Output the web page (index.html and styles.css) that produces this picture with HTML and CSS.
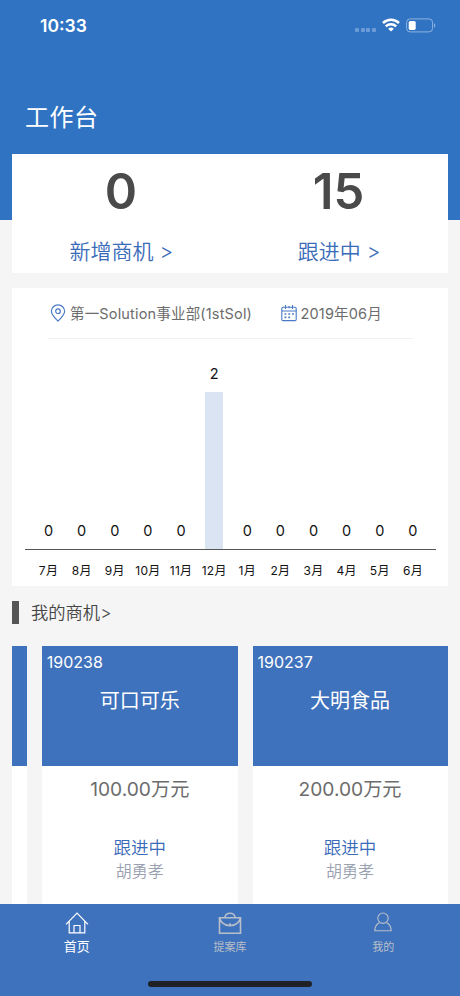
FILE: index.html
```html
<!DOCTYPE html>
<html lang="zh-CN">
<head>
<meta charset="utf-8">
<meta name="viewport" content="width=device-width, initial-scale=1">
<title>工作台</title>
<link rel="stylesheet" href="styles.css">
</head>
<body>
<div class="app">
  <header class="hero">
    <div class="status">
      <span class="time">10:33</span>
      <span class="status-icons">
        <span class="signal"><i></i><i></i><i></i><i></i></span>
        <svg class="wifi" viewBox="0 0 18 14" width="18" height="14" fill="none" stroke="#fff" stroke-width="2.5"><path d="M1 5a11.500 11.500 0 0 1 16 0M3.800 8.300a7.400 7.400 0 0 1 10.400 0"/><path d="M9 13.600 6.100 10.800a4.200 4.200 0 0 1 5.800 0z" fill="#fff" stroke="none"/></svg>
        <svg class="battery" viewBox="0 0 30 15" width="30" height="15"><rect x=".6" y=".9" width="26" height="13" rx="3.6" fill="none" stroke="#8db3e0"/><rect x="2.7" y="2.9" width="7" height="9" rx="1.6" fill="#fff"/><path d="M28 5.3c1.8.9 1.8 3.6 0 4.4z" fill="#8db3e0"/></svg>
      </span>
    </div>
    <h1>工作台</h1>
  </header>
  <main>
    <section class="stats">
      <div class="stat"><strong>0</strong><a>新增商机 &gt;</a></div>
      <div class="stat"><strong>15</strong><a>跟进中 &gt;</a></div>
    </section>
    <section class="chart-card">
      <div class="filters">
        <span class="filter dept"><svg viewBox="0 0 16 18" width="16" height="18" fill="none" stroke="#4a7ac6" stroke-width="1.2"><path d="M8 17C5.6 14.5 1.4 11 1.4 7.2a6.6 6.3 0 0 1 13.2 0C14.6 11 10.4 14.5 8 17z"/><circle cx="8" cy="7.2" r="2.3"/></svg><span>第一Solution事业部(1stSol)</span></span>
        <span class="filter month"><svg viewBox="0 0 16 18" width="16" height="18" fill="none" stroke="#4a7ac6" stroke-width="1.1"><rect x=".8" y="3.2" width="14.4" height="13.4" rx="1.2"/><path d="M.8 7h14.4M4.5 1v4M11.5 1v4M8 2v2.3"/><path d="M3.5 10h9.5M3.5 13.4h6" stroke-width="1.7" stroke-dasharray="1.8 2"/></svg><span>2019年06月</span></span>
      </div>
      <div class="chart">
        <div class="plot">
          <div class="col"><span>0</span></div><div class="col"><span>0</span></div><div class="col"><span>0</span></div><div class="col"><span>0</span></div><div class="col"><span>0</span></div>
          <div class="col filled"><span>2</span><div class="bar"></div></div>
          <div class="col"><span>0</span></div><div class="col"><span>0</span></div><div class="col"><span>0</span></div><div class="col"><span>0</span></div><div class="col"><span>0</span></div><div class="col"><span>0</span></div>
        </div>
        <div class="labels"><span>7月</span><span>8月</span><span>9月</span><span>10月</span><span>11月</span><span>12月</span><span>1月</span><span>2月</span><span>3月</span><span>4月</span><span>5月</span><span>6月</span></div>
      </div>
    </section>
    <h2><span>我的商机&gt;</span></h2>
    <section class="deals">
      <article class="deal peek"><div class="deal-head"></div></article>
      <article class="deal">
        <div class="deal-head"><span class="code">190238</span><h3>可口可乐</h3></div>
        <p class="amount">100.00万元</p><p class="state">跟进中</p><p class="owner">胡勇孝</p>
      </article>
      <article class="deal">
        <div class="deal-head"><span class="code">190237</span><h3>大明食品</h3></div>
        <p class="amount">200.00万元</p><p class="state">跟进中</p><p class="owner">胡勇孝</p>
      </article>
    </section>
  </main>
  <nav class="tabs">
    <div class="tab active"><svg viewBox="0 0 24 24" width="24" height="24" fill="none" stroke="#fff" stroke-width="1.2"><path d="M1 13.300 12 2.200l11 11.100M4.200 10.300v11.500h15.600V10.300M9 21.500v-7h6v7"/></svg><span>首页</span></div>
    <div class="tab"><svg viewBox="0 0 24 24" width="24" height="24" fill="none" stroke="#b9bfc9" stroke-width="1.6"><path d="M1.500 6.800h21v15.400h-21zM7 6.500a5 4.300 0 0 1 10 0M1.500 7c1.500 4.600 5.600 7.600 10.500 7.600S21 11.600 22.500 7M12 12.200v3.300"/></svg><span>提案库</span></div>
    <div class="tab"><svg viewBox="0 0 24 24" width="24" height="24" fill="none" stroke="#b9bfc9" stroke-width="1.1"><circle cx="12" cy="7.200" r="5.200"/><path d="M8.500 11.400C5.500 13 3.800 16 3.800 19.800h16.400c0-3.800-1.700-6.800-4.700-8.400"/></svg><span>我的</span></div>
    <div class="home-bar"></div>
  </nav>
</div>
</body>
</html>
```
FILE: styles.css
```css
* { box-sizing: border-box; margin: 0; padding: 0; }
body {
  background: #f5f5f5;
  font-family: Inter, "Noto Sans CJK SC", sans-serif;
}
.app { width: 460px; height: 996px; display: flex; flex-direction: column; overflow: hidden; }
.hero { height: 220px; flex: none; background: #3073c3; color: #fff; padding: 14px 24px 0 25px; }
.status { height: 24px; display: flex; justify-content: space-between; align-items: center; padding-left: 15px; }
.time { font-size: 17.5px; line-height: 24px; font-weight: 600; }
.status-icons { display: flex; align-items: center; }
.signal { display: flex; gap: 1.7px; margin: 8px 6px 0 0; }
.signal i { width: 4px; height: 4px; border-radius: 1px; background: #6c9cd7; }
.wifi { margin: -2px 6px 0 0; }
.battery { margin-top: -2px; }
h1 { margin-top: 62px; font-size: 24px; line-height: 36px; font-weight: 400; letter-spacing: .5px; }
main { flex: 1; min-height: 0; margin-top: -66.5px; padding: 0 12.5px 0 12px; display: flex; flex-direction: column; }
.stats { height: 119px; flex: none; background: #fff; display: grid; grid-template-columns: 1fr 1fr; text-align: center; }
.stat { display: flex; flex-direction: column; }
.stat strong { margin-top: 8px; font-size: 49px; line-height: 60px; font-weight: 600; color: #4a4a4a; }
.stat a { margin-top: 15px; padding-left: 1px; font-size: 21px; line-height: 30px; font-weight: 350; color: #3a6bb9; }
.chart-card { margin-top: 15.5px; height: 298px; flex: none; background: #fff; padding: 0 12px 0 13px; }
.filters { margin: 0 23px; height: 51px; border-bottom: 1px solid #f2f2f2; display: flex; align-items: center; color: #6c6c6c; font-size: 14.5px; }
.filter { display: flex; align-items: center; gap: 4px; white-space: nowrap; line-height: 22px; letter-spacing: .17px; }
.filter span { padding-top: 1px; }
.dept { padding-left: 2px; width: 232.5px; }
.chart { height: 247px; }
.plot { height: 211px; padding: 0 6px 0 7px; border-bottom: 1.5px solid #555; display: grid; grid-template-columns: repeat(12, 1fr); }
.col { display: flex; flex-direction: column; justify-content: flex-end; align-items: center; font-size: 14.5px; line-height: 20px; color: #111; padding-bottom: 8px; }
.col.filled { padding-bottom: 0; gap: 8px; }
.bar { width: 18.5px; height: 157px; background: #dae4f2; }
.labels { padding: 12px 6px 0 7px; display: grid; grid-template-columns: repeat(12, 1fr); text-align: center; font-size: 12px; line-height: 18px; letter-spacing: .3px; color: #111; white-space: nowrap; }
h2 { margin-top: 15px; height: 23px; flex: none; border-left: 7px solid #555; padding-left: 12px; font-size: 17.3px; line-height: 23px; font-weight: 350; color: #444; }
.deals { margin-top: 22px; flex: 1; display: grid; grid-template-columns: 15px 196px 195px; gap: 14.75px; }
.deal { background: #fff; text-align: center; }
.deal-head { height: 119.5px; background: #3f72bc; color: #fff; padding: 6px 5px; }
.code { display: block; text-align: left; font-size: 16px; line-height: 20px; }
h3 { margin-top: 14px; font-size: 20px; line-height: 30px; font-weight: 400; }
.amount { margin-top: 9px; font-size: 19.2px; line-height: 28px; color: #6c6c6c; }
.state { margin-top: 32px; font-size: 17.5px; line-height: 26px; font-weight: 350; color: #3a6bb9; }
.owner { font-size: 16px; line-height: 20px; font-weight: 350; color: #9aa1b0; }
.tabs { height: 92.5px; flex: none; background: #3f72bc; display: grid; grid-template-columns: repeat(3, 1fr); grid-template-rows: 80px 5px; }
.tab { padding-top: 7px; display: flex; flex-direction: column; align-items: center; color: #b9bfc9; font-size: 11px; line-height: 16px; }
.tab span { margin-top: 4px; }
.tab.active { color: #fff; font-size: 13px; }
.tab.active span { margin-top: 3px; }
.home-bar { grid-column: 1 / 4; justify-self: center; width: 164px; height: 6px; margin-top: -3px; border-radius: 3px; background: #202124; }
```
